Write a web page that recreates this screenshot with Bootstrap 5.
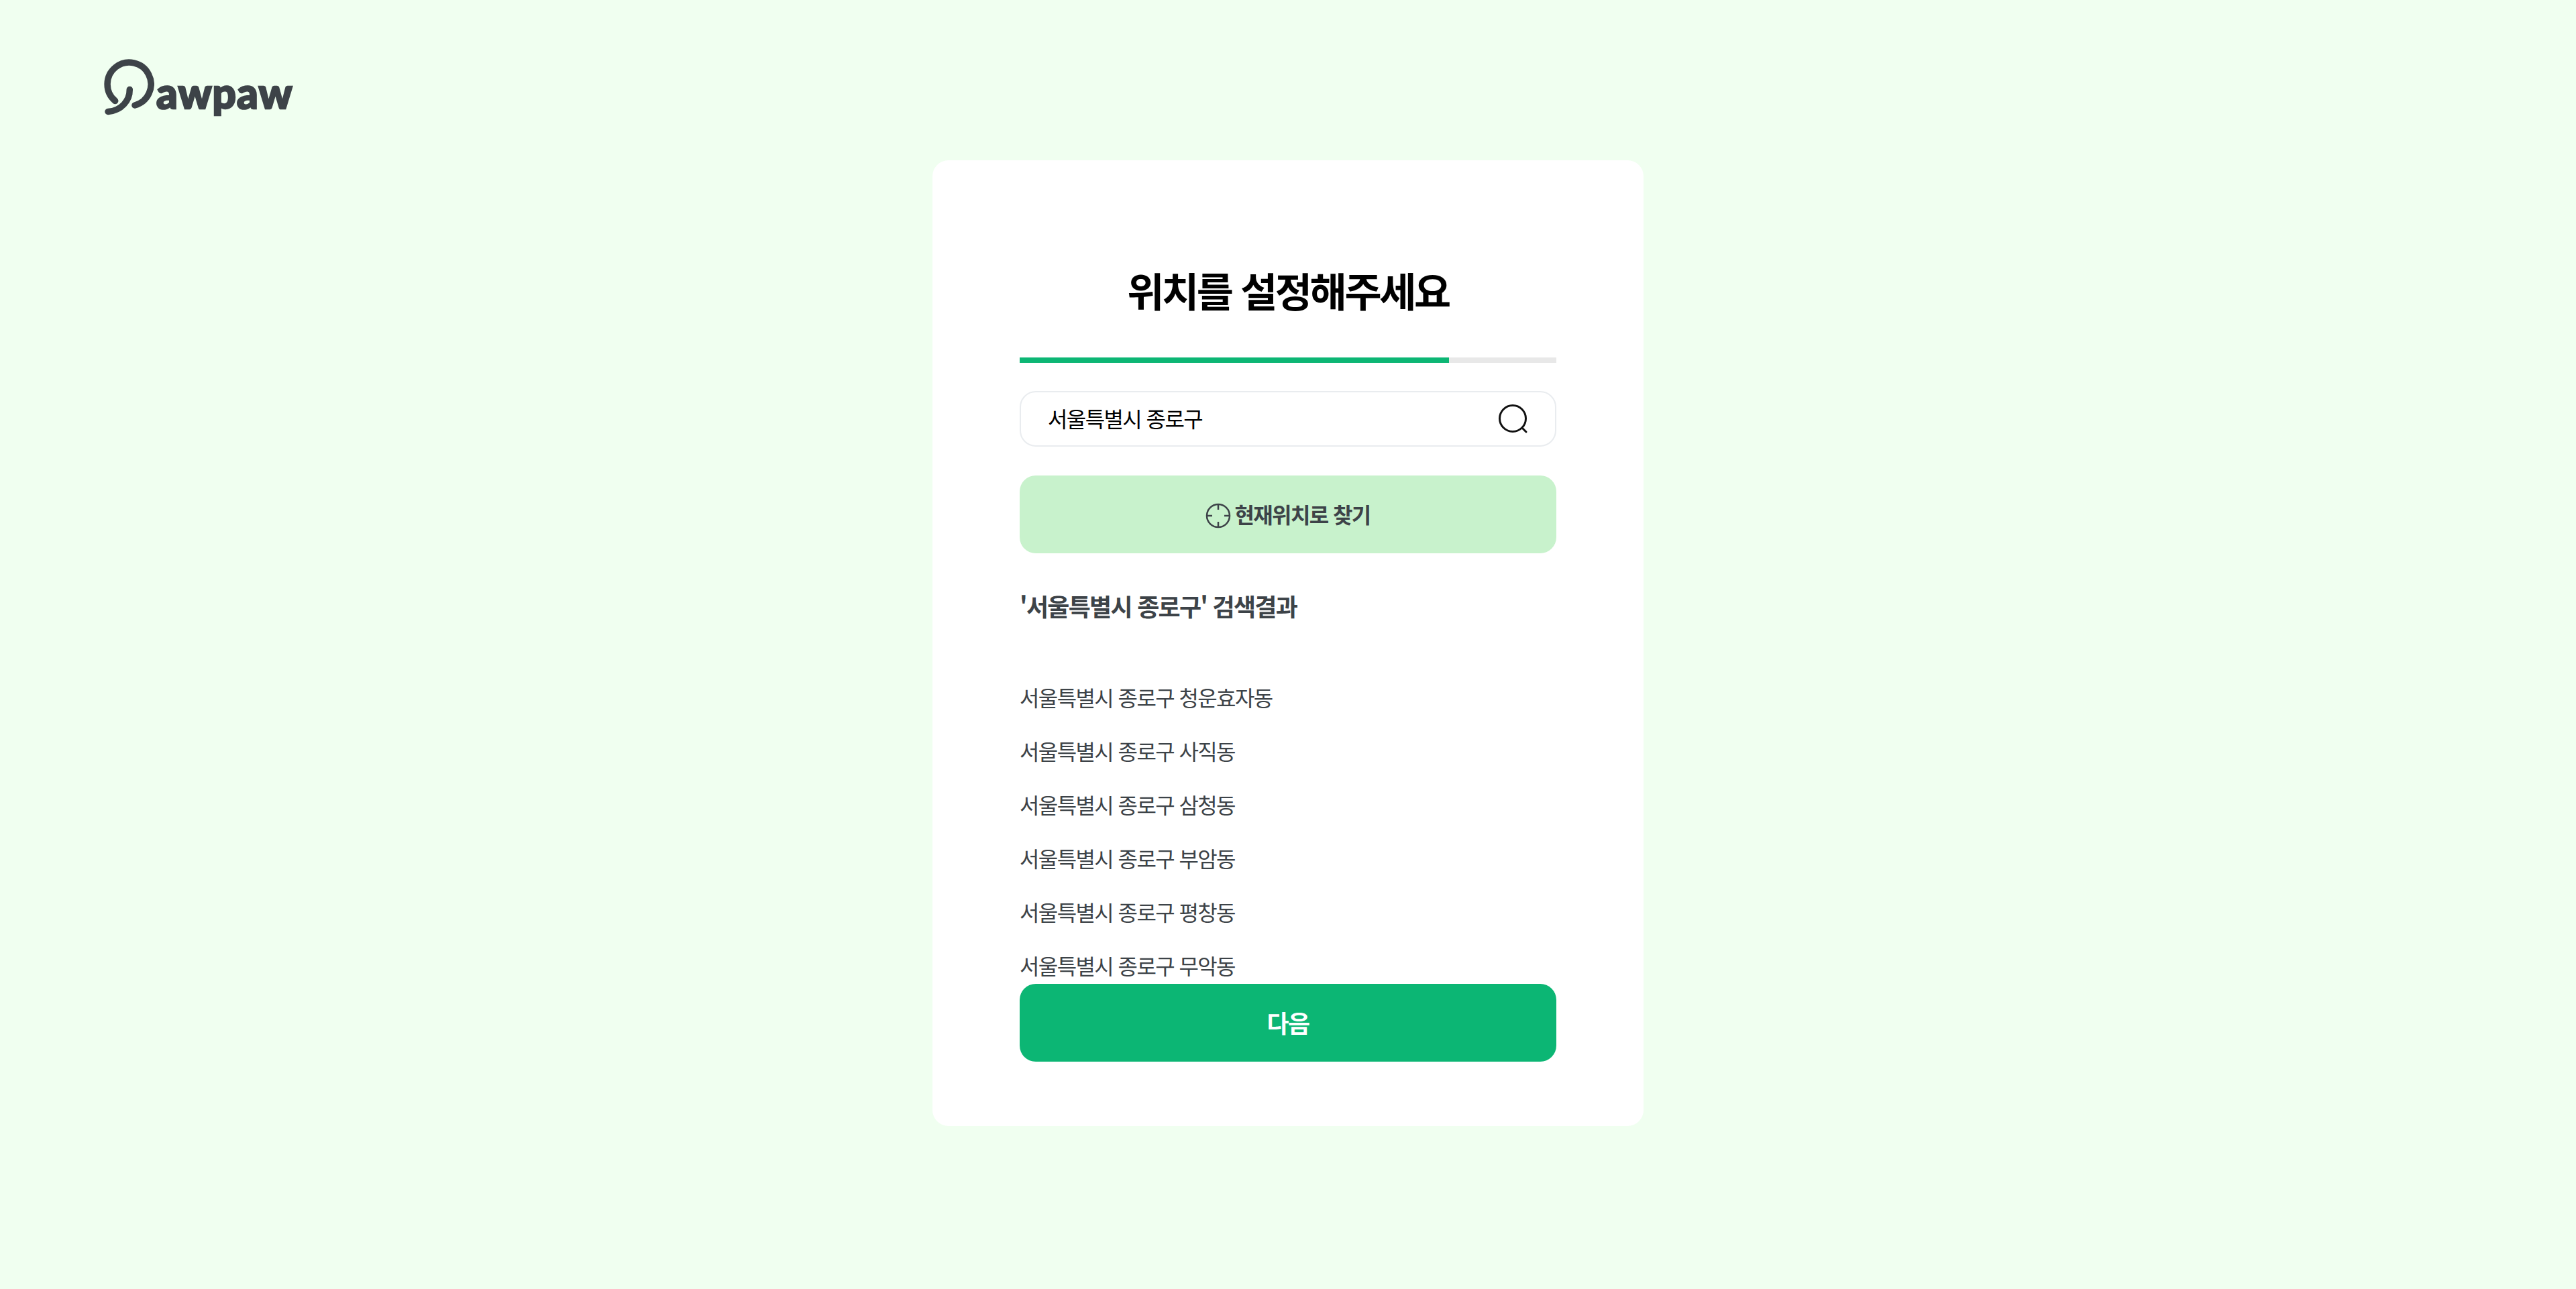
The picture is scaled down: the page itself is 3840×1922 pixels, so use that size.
<!DOCTYPE html>
<html lang="ko">
<head>
<meta charset="utf-8">
<title>Pawpaw</title>
<link href="https://cdn.jsdelivr.net/npm/bootstrap@5.3.0/dist/css/bootstrap.min.css" rel="stylesheet">
<style>
html,body{height:100%}
body{background:#f0fff0;font-family:"Noto Sans CJK KR","Noto Sans",sans-serif;color:#3d4348;min-height:1922px}
.site-head{height:239px;padding:80px 0 0 150px}
.logo-mark{width:80px;height:92px;display:block;margin-right:3px}
.logo-word{font-family:Lato,sans-serif;font-weight:900;font-size:62px;line-height:1;color:#3d4348;-webkit-text-stroke:2.5px #3d4348;paint-order:stroke;letter-spacing:1px;margin-top:27px}
.panel{width:1060px;height:1440px;background:#fff;border-radius:24px;padding:0 130px;margin:0 auto}
.panel-title{font-size:60px;font-weight:700;color:#000;letter-spacing:-3.4px;line-height:88px;margin:0;padding-top:149px;text-align:center;height:294px}
.step-track{height:8px;background:#e8e8e8;border-radius:0}
.step-track .progress-bar{background:#0cb674}
.search-box{height:83px;margin-top:42px;border:2px solid #e9ecef;border-radius:24px;padding:0 38px 0 40px}
.search-box .form-control{font-size:32px;letter-spacing:-1.6px;color:#000;padding:0 0 4px;height:100%;box-shadow:none;background:transparent}
.search-ico{width:48px;height:48px;flex:none}
.btn-locate,.btn-next{height:116px;width:100%;border:0;border-radius:24px;font-weight:700}
.btn-locate{margin-top:43px;background:#c8f2cc;color:#3d4348;font-size:32px;letter-spacing:-1.6px;padding-bottom:8px}
.btn-locate:hover,.btn-locate:active{background:#c8f2cc!important;color:#3d4348!important}
.locate-ico{width:38px;height:38px;margin-right:5px;margin-top:6px}
.result-title{font-size:36px;font-weight:700;letter-spacing:-1.75px;line-height:52px;margin:52px 0 0}
.result-scroll{height:468px;margin-top:70px;overflow:hidden}
.result-scroll .list-group-item{background:transparent;border:0;padding:0;height:80px;line-height:80px;font-size:32px;letter-spacing:-1.6px;color:#3d4348}
.btn-next{background:#0cb674;color:#fff;font-size:36px;letter-spacing:-1.5px;padding-bottom:8px}
.btn-next:hover,.btn-next:active{background:#0cb674!important;color:#fff!important}
</style>
</head>
<body>
<header class="site-head d-flex align-items-start">
  <svg class="logo-mark" viewBox="150 80 80 92" fill="none" stroke="#3d4348" stroke-width="9.5" stroke-linecap="round">
    <path d="M171.7 150.5A32.5 32.5 0 1 1 201 157"/>
    <path d="M193.3 133.5C193.5 150 181 165 161 166.5"/>
  </svg>
  <span class="logo-word">awpaw</span>
</header>
<main class="panel">
  <h1 class="panel-title">위치를 설정해주세요</h1>
  <div class="progress step-track" role="progressbar" aria-valuenow="80" aria-valuemin="0" aria-valuemax="100">
    <div class="progress-bar" style="width:80%"></div>
  </div>
  <div class="search-box d-flex align-items-center">
    <input class="form-control border-0" type="text" value="서울특별시 종로구" aria-label="주소 검색">
    <svg class="search-ico" viewBox="0 0 48 48" fill="none" stroke="#111" stroke-width="3" stroke-linecap="round">
      <circle cx="23" cy="23" r="19.5"/><path d="M38 38l5 5"/>
    </svg>
  </div>
  <button class="btn btn-locate d-flex align-items-center justify-content-center" type="button">
    <svg class="locate-ico" viewBox="0 0 38 38" fill="none" stroke="#3d4348" stroke-width="2.5">
      <circle cx="19" cy="19" r="17"/><path d="M19 2v8M19 28v8M2 19h8M28 19h8"/>
    </svg>
    현재위치로 찾기
  </button>
  <h2 class="result-title">'서울특별시 종로구' 검색결과</h2>
  <ul class="list-group list-group-flush result-scroll">
    <li class="list-group-item">서울특별시 종로구 청운효자동</li>
    <li class="list-group-item">서울특별시 종로구 사직동</li>
    <li class="list-group-item">서울특별시 종로구 삼청동</li>
    <li class="list-group-item">서울특별시 종로구 부암동</li>
    <li class="list-group-item">서울특별시 종로구 평창동</li>
    <li class="list-group-item">서울특별시 종로구 무악동</li>
  </ul>
  <button class="btn btn-next" type="button">다음</button>
</main>
<script src="https://cdn.jsdelivr.net/npm/bootstrap@5.3.0/dist/js/bootstrap.bundle.min.js"></script>
</body>
</html>
